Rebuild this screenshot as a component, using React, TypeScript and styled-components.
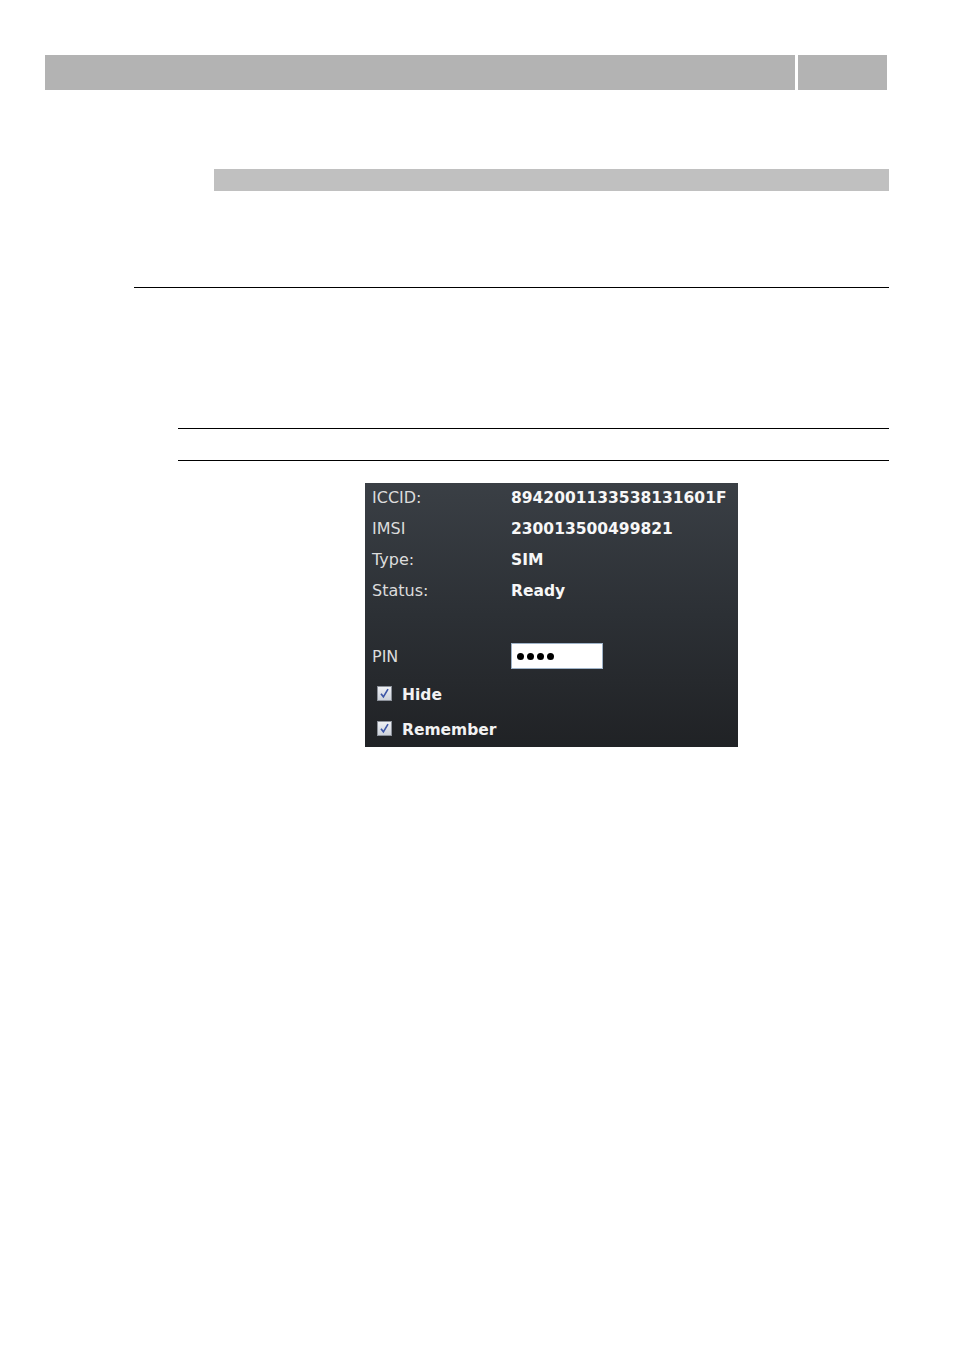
import * as React from 'react';
import styled, { createGlobalStyle } from 'styled-components';

const GlobalStyle = createGlobalStyle`
  html, body {
    margin: 0;
    padding: 0;
    background: #ffffff;
  }
  body {
    font-family: "DejaVu Sans", Verdana, sans-serif;
  }
`;

const Page = styled.div`
  width: 954px;
  min-height: 1349px;
  padding-top: 55px;
  box-sizing: border-box;
  display: flex;
  flex-direction: column;
`;

const HeaderRow = styled.header`
  display: flex;
  gap: 3px;
  margin-left: 45px;
  width: 842px;
  height: 35px;
`;

const HeaderBar = styled.div<{ $width?: number }>`
  background: #b3b3b3;
  ${(p) => (p.$width ? `width: ${p.$width}px;` : 'flex: 1;')}
`;

const SubBar = styled.div`
  margin: 79px 0 0 214px;
  width: 675px;
  height: 22px;
  background: #c0c0c0;
`;

const Rule = styled.hr<{ $left: number; $top: number }>`
  margin: ${(p) => p.$top}px 0 0 ${(p) => p.$left}px;
  width: ${(p) => 889 - p.$left}px;
  height: 1px;
  border: none;
  background: #000000;
`;

const Panel = styled.section`
  margin: 22px 0 0 365px;
  width: 373px;
  height: 264px;
  box-sizing: border-box;
  padding: 0 0 0 7px;
  background: linear-gradient(to bottom, #3a3f45 0%, #2c3035 50%, #202225 100%);
  display: flex;
  flex-direction: column;
`;

const InfoRow = styled.div`
  display: grid;
  grid-template-columns: 139px 1fr;
  align-items: center;
  height: 31px;

  &:first-child {
    margin-top: -1px;
  }
`;

const Label = styled.span`
  font-size: 16px;
  color: #dcdcdc;
`;

const Value = styled.span`
  font-size: 15.5px;
  font-weight: bold;
  color: #f7f7f7;
`;

const PinRow = styled(InfoRow)`
  margin-top: 37px;
  height: 26px;
`;

const PinInput = styled.div`
  width: 92px;
  height: 26px;
  box-sizing: border-box;
  background: #ffffff;
  border: 1px solid #9fb3c8;
  display: flex;
  align-items: center;
  gap: 3px;
  padding-left: 5px;
`;

const Dot = styled.span`
  width: 7px;
  height: 7px;
  border-radius: 50%;
  background: #000;
`;

const CheckRow = styled.label<{ $top: number }>`
  display: flex;
  align-items: center;
  gap: 10px;
  margin: ${(p) => p.$top}px 0 0 5px;
  height: 26px;
  font-size: 15.5px;
  font-weight: bold;
  color: #f2f2f2;
`;

const Box = styled.span`
  width: 15px;
  height: 15px;
  box-sizing: border-box;
  border: 1px solid #8c919a;
  background: linear-gradient(to bottom, #eef0f4, #cdd2da);
  display: flex;
  align-items: center;
  justify-content: center;
  margin-top: -4px;
`;

function Check() {
  return (
    <Box>
      <svg width="11" height="11" viewBox="0 0 10 10">
        <path d="M1.8 5.2 L4 8 L8.2 1" fill="none" stroke="#3c55a6" strokeWidth="1.5" />
      </svg>
    </Box>
  );
}

const rows = [
  ['ICCID:', '8942001133538131601F'],
  ['IMSI', '230013500499821'],
  ['Type:', 'SIM'],
  ['Status:', 'Ready'],
];

export default function App(): JSX.Element {
  return (
    <>
      <GlobalStyle />
      <Page>
        <HeaderRow>
          <HeaderBar />
          <HeaderBar $width={89} />
        </HeaderRow>
        <SubBar />
        <Rule $left={134} $top={96} />
        <Rule $left={178} $top={140} />
        <Rule $left={178} $top={31} />
        <Panel>
          {rows.map(([label, value]) => (
            <InfoRow key={label}>
              <Label>{label}</Label>
              <Value>{value}</Value>
            </InfoRow>
          ))}
          <PinRow>
            <Label>PIN</Label>
            <PinInput>
              <Dot />
              <Dot />
              <Dot />
              <Dot />
            </PinInput>
          </PinRow>
          <CheckRow $top={13}>
            <Check />
            Hide
          </CheckRow>
          <CheckRow $top={9}>
            <Check />
            Remember
          </CheckRow>
        </Panel>
      </Page>
    </>
  );
}
